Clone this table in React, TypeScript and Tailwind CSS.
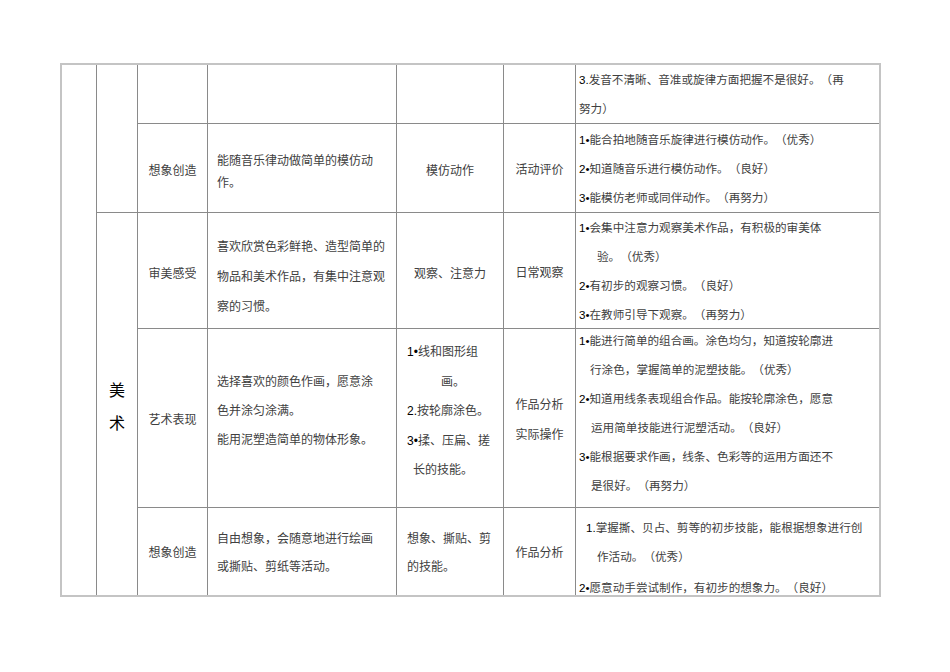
import React from "react";

type Line = { t: string; cls?: string };

// leading "1•" / "2." numbers render darker than the song-style CJK text
function Txt({ s }: { s: string }) {
  const m = s.match(/^(\d[.•])(.*)$/);
  if (!m) return <>{s}</>;
  return (
    <>
      <span className="text-black">{m[1]}</span>
      {m[2]}
    </>
  );
}

function Lines({ lines, className }: { lines: Line[]; className?: string }) {
  return (
    <div className={className}>
      {lines.map((l, i) => (
        <div key={i} className={"whitespace-nowrap " + (l.cls ?? "")}>
          <Txt s={l.t} />
        </div>
      ))}
    </div>
  );
}

const cell = "bg-white text-[#404040] overflow-visible";
const center = "flex items-center justify-center text-[12px] leading-[20px]";

export default function App() {
  return (
    <div className="min-h-[672px] w-[950px] bg-white pl-[60px] pt-[63px] font-['Liberation_Sans','Noto_Sans_CJK_SC',sans-serif] [text-spacing-trim:space-all]">
      <div className="w-[821px] border-2 border-[#c4c4c4]">
        <div className="grid grid-cols-[34px_40px_69px_188px_106px_71px_303px] grid-rows-[58px_88px_115px_178px_87px] gap-px bg-[#8a8a8a]">
          {/* outer left column and the subject column */}
          <div className={cell + " col-start-1 row-start-1 row-span-5"} />
          <div className={cell + " col-start-2 row-start-1 row-span-2"} />
          <div className={cell + " col-start-2 row-start-3 row-span-3 flex flex-col items-center justify-center pt-[5px] text-[16px] leading-[33px] text-black"}>
            <span>美</span>
            <span>术</span>
          </div>

          {/* row 1 */}
          <div className={cell + " col-start-3 row-start-1"} />
          <div className={cell + " col-start-4 row-start-1"} />
          <div className={cell + " col-start-5 row-start-1"} />
          <div className={cell + " col-start-6 row-start-1"} />
          <div className={cell + " col-start-7 row-start-1 flex flex-col justify-center pl-[3px] text-[11.6px] leading-[29px]"}>
            <Lines lines={[{ t: "3.发音不清晰、音准或旋律方面把握不是很好。（再" }, { t: "努力）" }]} />
          </div>

          {/* row 2 */}
          <div className={cell + " col-start-3 row-start-2 pt-[6px] " + center}>想象创造</div>
          <div className={cell + " col-start-4 row-start-2 pl-[9px] pt-[26px] text-[12px] leading-[22px]"}>
            <Lines lines={[{ t: "能随音乐律动做简单的模仿动" }, { t: "作。" }]} />
          </div>
          <div className={cell + " col-start-5 row-start-2 pt-[6px] " + center}>模仿动作</div>
          <div className={cell + " col-start-6 row-start-2 pt-[4px] " + center}>活动评价</div>
          <div className={cell + " col-start-7 row-start-2 flex flex-col justify-center pl-[3px] text-[11.6px] leading-[29px]"}>
            <Lines
              lines={[
                { t: "1•能合拍地随音乐旋律进行模仿动作。（优秀）" },
                { t: "2•知道随音乐进行模仿动作。（良好）" },
                { t: "3•能模仿老师或同伴动作。（再努力）" },
              ]}
            />
          </div>

          {/* row 3 */}
          <div className={cell + " col-start-3 row-start-3 pt-[6px] " + center}>审美感受</div>
          <div className={cell + " col-start-4 row-start-3 pl-[9px] pt-[19px] text-[12px] leading-[30px]"}>
            <Lines
              lines={[
                { t: "喜欢欣赏色彩鲜艳、造型简单的" },
                { t: "物品和美术作品，有集中注意观" },
                { t: "察的习惯。" },
              ]}
            />
          </div>
          <div className={cell + " col-start-5 row-start-3 pt-[6px] " + center}>观察、注意力</div>
          <div className={cell + " col-start-6 row-start-3 pt-[5px] " + center}>日常观察</div>
          <div className={cell + " col-start-7 row-start-3 flex flex-col justify-center pl-[3px] text-[11.6px] leading-[29px]"}>
            <Lines
              lines={[
                { t: "1•会集中注意力观察美术作品，有积极的审美体" },
                { t: "验。（优秀）", cls: "pl-[18px]" },
                { t: "2•有初步的观察习惯。（良好）" },
                { t: "3•在教师引导下观察。（再努力）" },
              ]}
            />
          </div>

          {/* row 4 */}
          <div className={cell + " col-start-3 row-start-4 pt-[4px] " + center}>艺术表现</div>
          <div className={cell + " col-start-4 row-start-4 pl-[9px] pt-[39px] text-[12px] leading-[29px]"}>
            <Lines
              lines={[
                { t: "选择喜欢的颜色作画，愿意涂" },
                { t: "色并涂匀涂满。" },
                { t: "能用泥塑造简单的物体形象。" },
              ]}
            />
          </div>
          <div className={cell + " col-start-5 row-start-4 pt-[9px] text-[12px] leading-[29.5px]"}>
            <Lines
              lines={[
                { t: "1•线和图形组", cls: "pl-[10px]" },
                { t: "画。", cls: "pl-[44px]" },
                { t: "2.按轮廓涂色。", cls: "pl-[10px]" },
                { t: "3•揉、压扁、搓", cls: "pl-[10px]" },
                { t: "长的技能。", cls: "pl-[16px]" },
              ]}
            />
          </div>
          <div className={cell + " col-start-6 row-start-4 flex flex-col items-center justify-center pt-[4px] text-[12px] leading-[30px]"}>
            <span>作品分析</span>
            <span>实际操作</span>
          </div>
          <div className={cell + " col-start-7 row-start-4 pl-[3px] text-[11.6px] leading-[29px]"}>
            <Lines
              className="-mt-[3px]"
              lines={[
                { t: "1•能进行简单的组合画。涂色均匀，知道按轮廓进" },
                { t: "行涂色，掌握简单的泥塑技能。（优秀）", cls: "pl-[11px]" },
                { t: "2•知道用线条表现组合作品。能按轮廓涂色，愿意" },
                { t: "运用简单技能进行泥塑活动。（良好）", cls: "pl-[12px]" },
                { t: "3•能根据要求作画，线条、色彩等的运用方面还不" },
                { t: "是很好。（再努力）", cls: "pl-[12px]" },
              ]}
            />
          </div>

          {/* row 5 */}
          <div className={cell + " col-start-3 row-start-5 pt-[3px] " + center}>想象创造</div>
          <div className={cell + " col-start-4 row-start-5 pl-[9px] pt-[17px] text-[12px] leading-[28px]"}>
            <Lines lines={[{ t: "自由想象，会随意地进行绘画" }, { t: "或撕贴、剪纸等活动。" }]} />
          </div>
          <div className={cell + " col-start-5 row-start-5 pl-[10px] pt-[17px] text-[12px] leading-[28px]"}>
            <Lines lines={[{ t: "想象、撕贴、剪" }, { t: "的技能。" }]} />
          </div>
          <div className={cell + " col-start-6 row-start-5 pt-[2px] " + center}>作品分析</div>
          <div className={cell + " col-start-7 row-start-5 pl-[3px] pt-[5px] text-[11.6px] leading-[29px]"}>
            <Lines
              lines={[
                { t: "1.掌握撕、贝占、剪等的初步技能，能根据想象进行创", cls: "pl-[7px]" },
                { t: "作活动。（优秀）", cls: "pl-[18px]" },
                { t: "2•愿意动手尝试制作，有初步的想象力。（良好）", cls: "mt-[2px]" },
              ]}
            />
          </div>
        </div>
      </div>
    </div>
  );
}
